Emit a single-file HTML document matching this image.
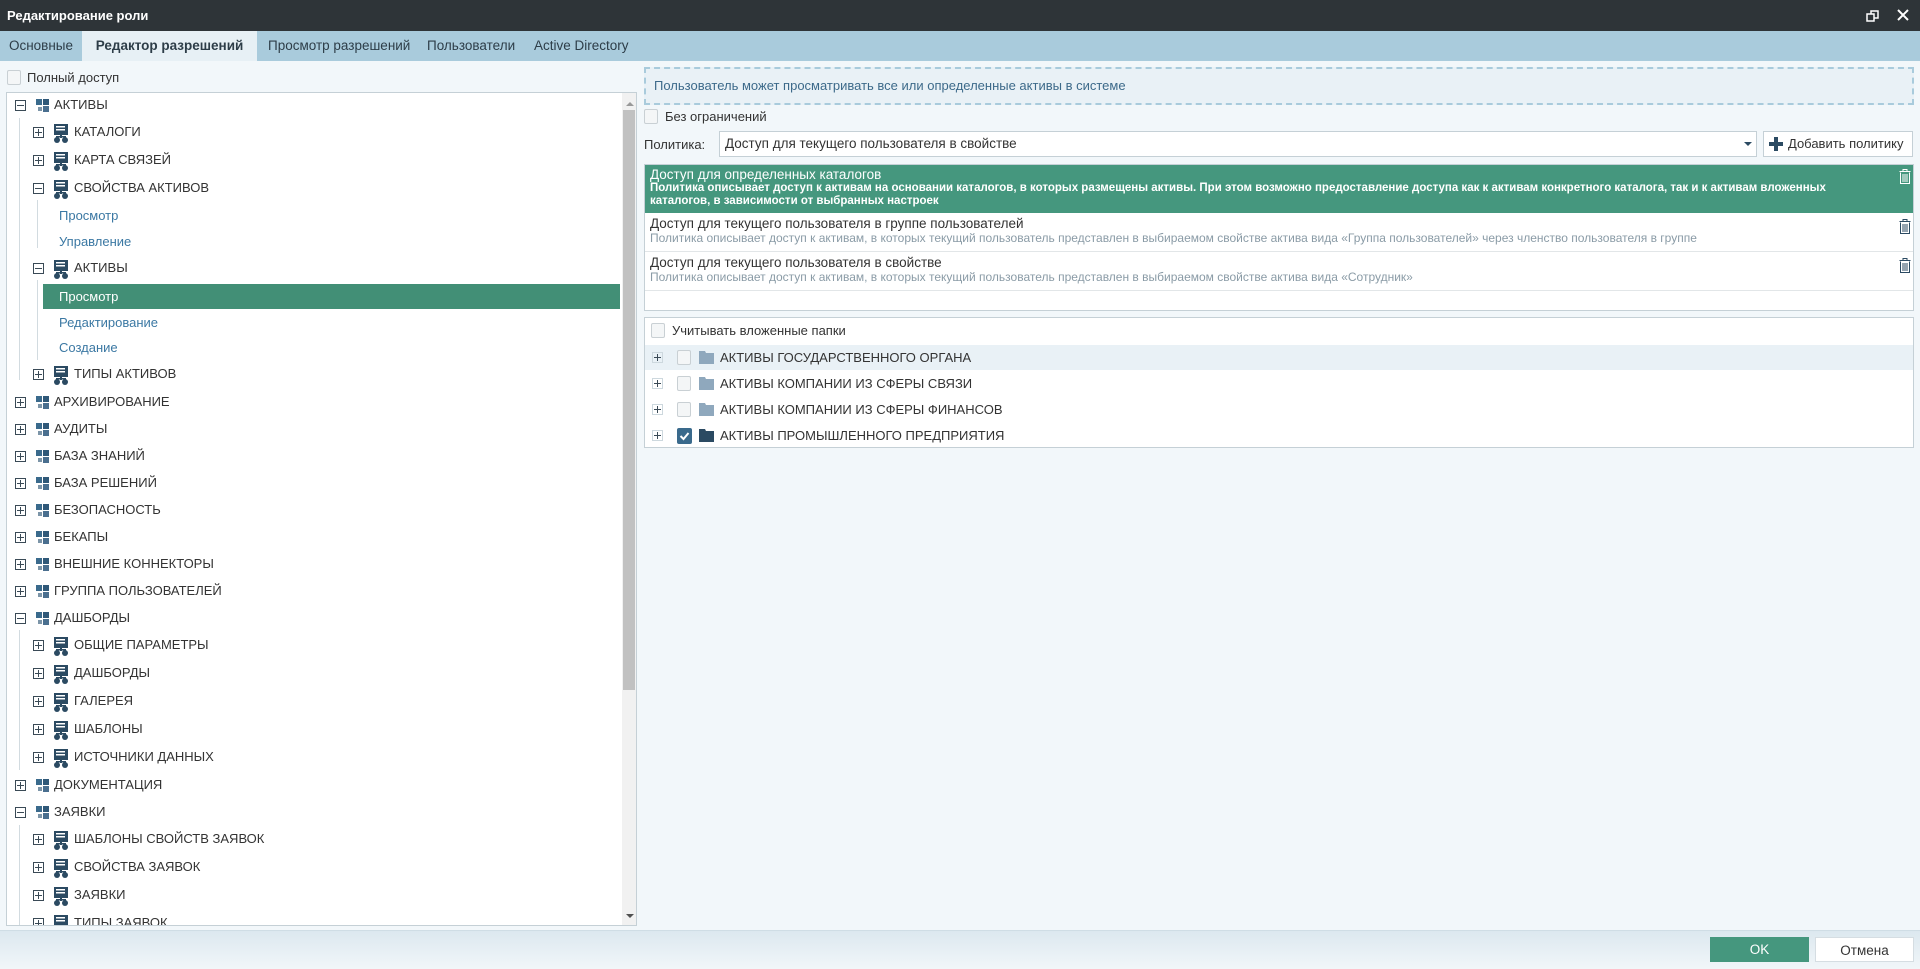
<!DOCTYPE html>
<html><head><meta charset="utf-8"><style>
*{box-sizing:border-box;margin:0;padding:0}
body{width:1920px;height:969px;overflow:hidden;background:#f2f7fa;font-family:"Liberation Sans","DejaVu Sans",sans-serif;font-size:13px;color:#333;position:relative}
.a{position:absolute;white-space:nowrap}
.title{left:0;top:0;width:1920px;height:31px;background:#2e3438;color:#fff;font-weight:bold;font-size:13px;line-height:31px;padding-left:7px}
.tabs{left:0;top:31px;width:1920px;height:30px;background:#a9cbdc}
.tab{position:absolute;top:0;height:30px;line-height:30px;font-size:13.5px;color:#2d3d48}
.tab.on{background:#e7f0f5;font-weight:bold}
.cb{position:absolute;width:14px;height:15px;border:1px solid #c9d0d4;background:#f4f6f7;border-radius:2px}
.tree{left:6px;top:92px;width:631px;height:834px;background:#fff;border:1px solid #c5d0d6;overflow:hidden}
.r{position:absolute;height:26px;line-height:26px;font-size:13px;color:#333}
.tg{position:absolute;width:11px;height:11px;border:1px solid #3a4a56;top:8px}
.tg:before{content:"";position:absolute;left:1px;top:4px;width:7px;height:1px;background:#3a4a56}
.tg.p:after{content:"";position:absolute;left:4px;top:1px;width:1px;height:7px;background:#3a4a56}
.leaf{color:#3b78a3}
.sel{background:#428f76;color:#fff}
.vl{position:absolute;width:1px;background:#d2dbe0}
.btn{position:absolute;height:25px;line-height:25px;text-align:center;font-size:13.5px}
</style></head><body>
<div class="a title">Редактирование роли</div>
<svg class="a" style="left:1866px;top:9px" width="14" height="14"><rect x="1" y="5" width="7" height="7" fill="none" stroke="#fff" stroke-width="1.5"/><path d="M5 5V2h7v7H8" fill="none" stroke="#fff" stroke-width="1.5"/></svg>
<svg class="a" style="left:1897px;top:9px" width="12" height="12"><path d="M1 1L11 11M11 1L1 11" stroke="#fff" stroke-width="2"/></svg>
<div class="a tabs">
<div class="tab" style="left:0;width:82px;text-align:center">Основные</div>
<div class="tab on" style="left:82px;width:175px;text-align:center">Редактор разрешений</div>
<div class="tab" style="left:268px">Просмотр разрешений</div>
<div class="tab" style="left:427px">Пользователи</div>
<div class="tab" style="left:534px">Active Directory</div>
</div>
<div class="cb" style="left:7px;top:70px"></div>
<div class="a" style="left:27px;top:69px;line-height:17px;color:#333">Полный доступ</div>

<div class="a tree"></div>
<div class="a" style="left:622px;top:93px;width:14px;height:832px;background:#f1f1f1"></div>
<div class="a" style="left:623px;top:110px;width:12px;height:580px;background:#c1c1c1"></div>
<div class="a" style="left:626px;top:102px;border:4px solid transparent;border-bottom:4px solid #999;border-top:0"></div>
<div class="a" style="left:626px;top:914px;border:4px solid transparent;border-top:4px solid #505050;border-bottom:0"></div>

<div class="vl" style="left:19px;top:118px;height:262px"></div>
<div class="vl" style="left:37px;top:200px;height:48px"></div>
<div class="vl" style="left:37px;top:280px;height:80px"></div>
<div class="vl" style="left:19px;top:630px;height:140px"></div>
<div class="vl" style="left:19px;top:825px;height:100px"></div>

<svg width="0" height="0" style="position:absolute"><defs>
<g id="g0"><rect x="0" y="0" width="6" height="6" fill="#3a6a8c"/><rect x="7" y="0" width="6" height="6" fill="#2f5878"/><rect x="0" y="7" width="6" height="6" fill="#fff"/><rect x="2" y="8" width="4" height="4" fill="#7c95a8"/><rect x="7" y="7" width="6" height="6" fill="#4a6f8f"/></g>
<g id="g1"><rect x="1" y="0" width="14" height="11" fill="#2b4a62"/><rect x="3" y="2" width="9" height="1.5" fill="#fff"/><rect x="3" y="5" width="9" height="1.5" fill="#fff"/><rect x="7" y="11" width="2" height="3" fill="#2b4a62"/><rect x="3" y="12" width="10" height="1.5" fill="#2b4a62"/><circle cx="4" cy="16" r="3" fill="#2b4a62"/><circle cx="12" cy="16" r="3" fill="#2b4a62"/></g>
</defs></svg>

<div class="r" style="left:6px;top:92px;width:620px"><span class="tg" style="left:9px"></span><svg class="a" style="left:30px;top:7px" width="13" height="13"><use href="#g0"/></svg><span class="a" style="left:48px">АКТИВЫ</span></div>
<div class="r" style="left:6px;top:119px;width:620px"><span class="tg p" style="left:27px"></span><svg class="a" style="left:47px;top:5px" width="16" height="20"><use href="#g1"/></svg><span class="a" style="left:68px">КАТАЛОГИ</span></div>
<div class="r" style="left:6px;top:147px;width:620px"><span class="tg p" style="left:27px"></span><svg class="a" style="left:47px;top:5px" width="16" height="20"><use href="#g1"/></svg><span class="a" style="left:68px">КАРТА СВЯЗЕЙ</span></div>
<div class="r" style="left:6px;top:175px;width:620px"><span class="tg" style="left:27px"></span><svg class="a" style="left:47px;top:5px" width="16" height="20"><use href="#g1"/></svg><span class="a" style="left:68px">СВОЙСТВА АКТИВОВ</span></div>
<div class="r leaf" style="left:6px;top:203px;width:620px"><span class="a" style="left:53px">Просмотр</span></div>
<div class="r leaf" style="left:6px;top:229px;width:620px"><span class="a" style="left:53px">Управление</span></div>
<div class="r" style="left:6px;top:255px;width:620px"><span class="tg" style="left:27px"></span><svg class="a" style="left:47px;top:5px" width="16" height="20"><use href="#g1"/></svg><span class="a" style="left:68px">АКТИВЫ</span></div>
<div class="r sel" style="left:43px;top:284px;width:577px;height:25px;line-height:25px"><span class="a" style="left:16px">Просмотр</span></div>
<div class="r leaf" style="left:6px;top:310px;width:620px"><span class="a" style="left:53px">Редактирование</span></div>
<div class="r leaf" style="left:6px;top:335px;width:620px"><span class="a" style="left:53px">Создание</span></div>
<div class="r" style="left:6px;top:361px;width:620px"><span class="tg p" style="left:27px"></span><svg class="a" style="left:47px;top:5px" width="16" height="20"><use href="#g1"/></svg><span class="a" style="left:68px">ТИПЫ АКТИВОВ</span></div>

<div class="r" style="left:6px;top:389px"><span class="tg p" style="left:9px"></span><svg class="a" style="left:30px;top:7px" width="13" height="13"><use href="#g0"/></svg><span class="a" style="left:48px">АРХИВИРОВАНИЕ</span></div>
<div class="r" style="left:6px;top:416px"><span class="tg p" style="left:9px"></span><svg class="a" style="left:30px;top:7px" width="13" height="13"><use href="#g0"/></svg><span class="a" style="left:48px">АУДИТЫ</span></div>
<div class="r" style="left:6px;top:443px"><span class="tg p" style="left:9px"></span><svg class="a" style="left:30px;top:7px" width="13" height="13"><use href="#g0"/></svg><span class="a" style="left:48px">БАЗА ЗНАНИЙ</span></div>
<div class="r" style="left:6px;top:470px"><span class="tg p" style="left:9px"></span><svg class="a" style="left:30px;top:7px" width="13" height="13"><use href="#g0"/></svg><span class="a" style="left:48px">БАЗА РЕШЕНИЙ</span></div>
<div class="r" style="left:6px;top:497px"><span class="tg p" style="left:9px"></span><svg class="a" style="left:30px;top:7px" width="13" height="13"><use href="#g0"/></svg><span class="a" style="left:48px">БЕЗОПАСНОСТЬ</span></div>
<div class="r" style="left:6px;top:524px"><span class="tg p" style="left:9px"></span><svg class="a" style="left:30px;top:7px" width="13" height="13"><use href="#g0"/></svg><span class="a" style="left:48px">БЕКАПЫ</span></div>
<div class="r" style="left:6px;top:551px"><span class="tg p" style="left:9px"></span><svg class="a" style="left:30px;top:7px" width="13" height="13"><use href="#g0"/></svg><span class="a" style="left:48px">ВНЕШНИЕ КОННЕКТОРЫ</span></div>
<div class="r" style="left:6px;top:578px"><span class="tg p" style="left:9px"></span><svg class="a" style="left:30px;top:7px" width="13" height="13"><use href="#g0"/></svg><span class="a" style="left:48px">ГРУППА ПОЛЬЗОВАТЕЛЕЙ</span></div>
<div class="r" style="left:6px;top:605px"><span class="tg" style="left:9px"></span><svg class="a" style="left:30px;top:7px" width="13" height="13"><use href="#g0"/></svg><span class="a" style="left:48px">ДАШБОРДЫ</span></div>
<div class="r" style="left:6px;top:632px"><span class="tg p" style="left:27px"></span><svg class="a" style="left:47px;top:5px" width="16" height="20"><use href="#g1"/></svg><span class="a" style="left:68px">ОБЩИЕ ПАРАМЕТРЫ</span></div>
<div class="r" style="left:6px;top:660px"><span class="tg p" style="left:27px"></span><svg class="a" style="left:47px;top:5px" width="16" height="20"><use href="#g1"/></svg><span class="a" style="left:68px">ДАШБОРДЫ</span></div>
<div class="r" style="left:6px;top:688px"><span class="tg p" style="left:27px"></span><svg class="a" style="left:47px;top:5px" width="16" height="20"><use href="#g1"/></svg><span class="a" style="left:68px">ГАЛЕРЕЯ</span></div>
<div class="r" style="left:6px;top:716px"><span class="tg p" style="left:27px"></span><svg class="a" style="left:47px;top:5px" width="16" height="20"><use href="#g1"/></svg><span class="a" style="left:68px">ШАБЛОНЫ</span></div>
<div class="r" style="left:6px;top:744px"><span class="tg p" style="left:27px"></span><svg class="a" style="left:47px;top:5px" width="16" height="20"><use href="#g1"/></svg><span class="a" style="left:68px">ИСТОЧНИКИ ДАННЫХ</span></div>
<div class="r" style="left:6px;top:772px"><span class="tg p" style="left:9px"></span><svg class="a" style="left:30px;top:7px" width="13" height="13"><use href="#g0"/></svg><span class="a" style="left:48px">ДОКУМЕНТАЦИЯ</span></div>
<div class="r" style="left:6px;top:799px"><span class="tg" style="left:9px"></span><svg class="a" style="left:30px;top:7px" width="13" height="13"><use href="#g0"/></svg><span class="a" style="left:48px">ЗАЯВКИ</span></div>
<div class="r" style="left:6px;top:826px"><span class="tg p" style="left:27px"></span><svg class="a" style="left:47px;top:5px" width="16" height="20"><use href="#g1"/></svg><span class="a" style="left:68px">ШАБЛОНЫ СВОЙСТВ ЗАЯВОК</span></div>
<div class="r" style="left:6px;top:854px"><span class="tg p" style="left:27px"></span><svg class="a" style="left:47px;top:5px" width="16" height="20"><use href="#g1"/></svg><span class="a" style="left:68px">СВОЙСТВА ЗАЯВОК</span></div>
<div class="r" style="left:6px;top:882px"><span class="tg p" style="left:27px"></span><svg class="a" style="left:47px;top:5px" width="16" height="20"><use href="#g1"/></svg><span class="a" style="left:68px">ЗАЯВКИ</span></div>
<div class="a" style="left:6px;top:910px;width:615px;height:15px;overflow:hidden"><div class="r" style="left:0;top:0"><span class="tg p" style="left:27px"></span><svg class="a" style="left:47px;top:5px" width="16" height="20"><use href="#g1"/></svg><span class="a" style="left:68px">ТИПЫ ЗАЯВОК</span></div></div>

<div class="a" style="left:644px;top:67px;width:1270px;height:38px;border:2px dashed #a9cbdc;background:#e9f1f6"></div>
<div class="a" style="left:654px;top:77px;line-height:18px;color:#3d6a8a">Пользователь может просматривать все или определенные активы в системе</div>
<div class="cb" style="left:644px;top:109px"></div>
<div class="a" style="left:665px;top:108px;line-height:17px">Без ограничений</div>
<div class="a" style="left:644px;top:136px;line-height:17px">Политика:</div>
<div class="a" style="left:719px;top:131px;width:1038px;height:26px;background:#fff;border:1px solid #c5d0d6;line-height:24px;padding-left:5px;font-size:13.5px">Доступ для текущего пользователя в свойстве</div>
<div class="a" style="left:1744px;top:142px;border:4px solid transparent;border-top:4px solid #2b4a62;border-bottom:0"></div>
<div class="a" style="left:1763px;top:131px;width:150px;height:26px;background:#fff;border:1px solid #c5d0d6;line-height:24px;padding-left:24px">Добавить политику</div>
<svg class="a" style="left:1769px;top:137px" width="14" height="14"><path d="M5 0h4v5h5v4H9v5H5V9H0V5h5z" fill="#2b4a62"/></svg>

<div class="a" style="left:644px;top:164px;width:1270px;height:147px;background:#fff;border:1px solid #c5d0d6"></div>
<div class="a" style="left:645px;top:165px;width:1268px;height:48px;background:#45977e;color:#fff;padding:3px 5px;font-size:13.5px;line-height:14px;white-space:normal">
<div>Доступ для определенных каталогов</div>
<div style="font-weight:bold;font-size:11.5px;line-height:13px;width:1200px">Политика описывает доступ к активам на основании каталогов, в которых размещены активы. При этом возможно предоставление доступа как к активам конкретного каталога, так и к активам вложенных каталогов, в зависимости от выбранных настроек</div>
</div>
<div class="a" style="left:645px;top:213px;width:1268px;height:39px;border-bottom:1px solid #e2e6e8;padding:4px 5px;line-height:14px">
<div style="font-size:13.5px">Доступ для текущего пользователя в группе пользователей</div>
<div style="font-size:12px;color:#8a9ba6;line-height:15px">Политика описывает доступ к активам, в которых текущий пользователь представлен в выбираемом свойстве актива вида «Группа пользователей» через членство пользователя в группе</div>
</div>
<div class="a" style="left:645px;top:252px;width:1268px;height:39px;border-bottom:1px solid #e2e6e8;padding:4px 5px;line-height:14px">
<div style="font-size:13.5px">Доступ для текущего пользователя в свойстве</div>
<div style="font-size:12px;color:#8a9ba6;line-height:15px">Политика описывает доступ к активам, в которых текущий пользователь представлен в выбираемом свойстве актива вида «Сотрудник»</div>
</div>
<svg class="a" style="left:1899px;top:169px" width="12" height="15"><path d="M0.5 2.5h11M4 2.5V0.5h4v2M1.5 3.5v11h9v-11M4 5v8M6 5v8M8 5v8" fill="none" stroke="#fff" stroke-width="1"/></svg>
<svg class="a" style="left:1899px;top:219px" width="12" height="15"><path d="M0.5 2.5h11M4 2.5V0.5h4v2M1.5 3.5v11h9v-11M4 5v8M6 5v8M8 5v8" fill="none" stroke="#2b4a62" stroke-width="1"/></svg>
<svg class="a" style="left:1899px;top:258px" width="12" height="15"><path d="M0.5 2.5h11M4 2.5V0.5h4v2M1.5 3.5v11h9v-11M4 5v8M6 5v8M8 5v8" fill="none" stroke="#2b4a62" stroke-width="1"/></svg>

<div class="a" style="left:644px;top:317px;width:1270px;height:131px;background:#fff;border:1px solid #c5d0d6"></div>
<div class="cb" style="left:651px;top:323px"></div>
<div class="a" style="left:672px;top:322px;line-height:17px">Учитывать вложенные папки</div>
<div class="a" style="left:645px;top:345px;width:1268px;height:25px;background:#e9f1f6"></div>
<div class="a" style="left:645px;top:345px;width:1268px;height:25px;line-height:25px">
<span class="tg p" style="left:7px;top:7px;border-color:#cdd8de"></span><span class="cb" style="left:32px;top:5px"></span>
<svg class="a" style="left:54px;top:6px" width="15" height="13"><path d="M0 0h6l1 2h8v11H0z" fill="#8fa8bd"/></svg><span class="a" style="left:75px">АКТИВЫ ГОСУДАРСТВЕННОГО ОРГАНА</span></div>
<div class="a" style="left:645px;top:371px;width:1268px;height:25px;line-height:25px">
<span class="tg p" style="left:7px;top:7px;border-color:#cdd8de"></span><span class="cb" style="left:32px;top:5px"></span>
<svg class="a" style="left:54px;top:6px" width="15" height="13"><path d="M0 0h6l1 2h8v11H0z" fill="#8fa8bd"/></svg><span class="a" style="left:75px">АКТИВЫ КОМПАНИИ ИЗ СФЕРЫ СВЯЗИ</span></div>
<div class="a" style="left:645px;top:397px;width:1268px;height:25px;line-height:25px">
<span class="tg p" style="left:7px;top:7px;border-color:#cdd8de"></span><span class="cb" style="left:32px;top:5px"></span>
<svg class="a" style="left:54px;top:6px" width="15" height="13"><path d="M0 0h6l1 2h8v11H0z" fill="#8fa8bd"/></svg><span class="a" style="left:75px">АКТИВЫ КОМПАНИИ ИЗ СФЕРЫ ФИНАНСОВ</span></div>
<div class="a" style="left:645px;top:423px;width:1268px;height:25px;line-height:25px">
<span class="tg p" style="left:7px;top:7px;border-color:#cdd8de"></span>
<svg class="a" style="left:32px;top:5px" width="15" height="16"><rect width="15" height="16" rx="2" fill="#3a6a8c"/><path d="M3.5 8l3 3 5-6" fill="none" stroke="#fff" stroke-width="2"/></svg>
<svg class="a" style="left:54px;top:6px" width="15" height="13"><path d="M0 0h6l1 2h8v11H0z" fill="#2b4a62"/></svg><span class="a" style="left:75px">АКТИВЫ ПРОМЫШЛЕННОГО ПРЕДПРИЯТИЯ</span></div>

<div class="a" style="left:0;top:930px;width:1920px;height:39px;background:linear-gradient(#dce8ef,#f1f6f9);border-top:1px solid #cfdde5"></div>
<div class="btn" style="left:1710px;top:937px;width:99px;background:#45977e;color:#fff">OK</div>
<div class="btn" style="left:1815px;top:937px;width:99px;background:#fff;border:1px solid #d5dde2">Отмена</div>
</body></html>
